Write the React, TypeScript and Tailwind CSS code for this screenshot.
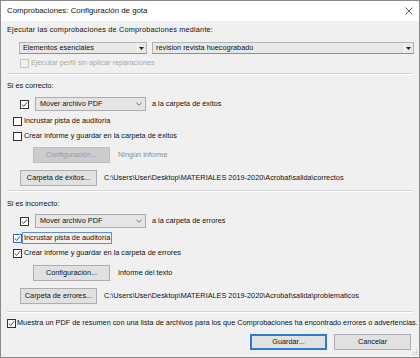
import React from 'react'

const Check = ({ checked = false, disabled = false, focus = false }: { checked?: boolean; disabled?: boolean; focus?: boolean }) => (
  <span
    className={`w-[9px] h-[9px] shrink-0 border flex items-center justify-center ${
      disabled ? 'border-[#c5c5c5] bg-[#f0f0f0]' : focus ? 'border-[#1f6fd1] bg-white' : 'border-[#333] bg-white'
    }`}
  >
    {checked && (
      <svg width="7" height="7" viewBox="0 0 7 7">
        <path d="M0.8 3.6 L2.7 5.4 L6.2 1.2" fill="none" stroke="#333" strokeWidth="0.9" />
      </svg>
    )}
  </span>
)

const CheckRow = ({ label, checked, focus }: { label: string; checked?: boolean; focus?: boolean }) => (
  <div className="h-[12px] flex items-center pl-[12px]">
    <Check checked={checked} focus={focus} />
    <span className={`ml-[1px] px-[1px] leading-[10px] ${focus ? 'outline outline-1 outline-[#5b8fd6]' : ''}`}>{label}</span>
  </div>
)

const Combo = ({ label }: { label: string }) => (
  <div className="w-[111px] h-[14px] border border-[#acacac] bg-[#e5e5e5] flex items-center justify-between pl-[4px] pr-[3px]">
    <span>{label}</span>
    <svg width="6" height="4" viewBox="0 0 6 4">
      <path d="M0.5 0.8 L3 3.2 L5.5 0.8" fill="none" stroke="#555" strokeWidth="0.8" />
    </svg>
  </div>
)

const OldCombo = ({ label, w }: { label: string; w: string }) => (
  <div className={`${w} h-[12px] border border-[#b4b4b4] border-b-[#8e8e8e] bg-[#e8e8e8] flex items-center justify-between pl-[3px] pr-[2px]`}>
    <span>{label}</span>
    <span className="flex items-center h-full border-l border-[#f7f7f7] pl-[1px]">
      <svg width="5" height="3" viewBox="0 0 5 3">
        <path d="M0 0 L5 0 L2.5 3 Z" fill="#222" />
      </svg>
    </span>
  </div>
)

const Btn = ({ label, disabled, primary, w = 'w-[77px]' }: { label: string; disabled?: boolean; primary?: boolean; w?: string }) => (
  <div
    className={`${w} h-[16px] shrink-0 flex items-center justify-center border ${
      disabled
        ? 'border-[#bfbfbf] bg-[#cccccc] text-[#9a9a9a]'
        : primary
        ? 'border-[#2a7ad5] bg-[#e1e1e1] shadow-[inset_0_0_0_1px_#2a7ad5]'
        : 'border-[#adadad] bg-[#e1e1e1]'
    }`}
  >
    {label}
  </div>
)

const Sep = () => <div className="h-[2px] border-t border-[#d5d5d5] border-b border-b-white mx-[6px]" />

export default function App() {
  return (
    <div className="relative w-[420px] h-[358px] border border-[#8a8a8a] bg-[#f0f0f0] flex flex-col text-[7.3px] text-[#111] font-['Liberation_Sans',Arial,sans-serif] overflow-hidden">
      {/* title bar */}
      <div className="h-[20px] bg-white flex items-center justify-between pl-[6px] pr-[6px] text-[7.85px]">
        <span>Comprobaciones: Configuración de gota</span>
        <svg width="8" height="8" viewBox="0 0 8 8">
          <path d="M0.5 0.5 L7.5 7.5 M7.5 0.5 L0.5 7.5" stroke="#333" strokeWidth="0.8" />
        </svg>
      </div>

      <div className="flex flex-col pt-[3px]">
        <div className="h-[12px] flex items-center pl-[6px] tracking-[0.2px]">Ejecutar las comprobaciones de Comprobaciones mediante:</div>

        <div className="mt-[6px] flex gap-[5px] pl-[18px] pr-[5px]">
          <OldCombo label="Elementos esenciales" w="w-[128px]" />
          <OldCombo label="revision revista huecograbado" w="flex-1" />
        </div>

        <div className="mt-[3px] h-[12px] flex items-center pl-[19px] text-[#a8a8a8]">
          <Check disabled />
          <span className="ml-[2px]">Ejecutar perfil sin aplicar reparaciones</span>
        </div>

        <div className="mt-[4px]"><Sep /></div>

        <div className="mt-[5px] h-[12px] flex items-center pl-[6px]">Si es correcto:</div>

        <div className="mt-[5px] flex items-center pl-[19px] gap-[6px]">
          <Check checked />
          <Combo label="Mover archivo PDF" />
          <span>a la carpeta de éxitos</span>
        </div>

        <div className="mt-[4px]"><CheckRow label="Incrustar pista de auditoría" /></div>
        <div className="mt-[3px]"><CheckRow label="Crear informe y guardar en la carpeta de éxitos" /></div>

        <div className="mt-[5px] flex items-center pl-[32px] gap-[8px]">
          <Btn label="Configuración..." disabled />
          <span className="text-[#8c8c8c]">Ningún informe</span>
        </div>

        <div className="mt-[7px] flex items-center pl-[19px] gap-[7px]">
          <Btn label="Carpeta de éxitos..." />
          <span>C:\Users\User\Desktop\MATERIALES 2019-2020\Acrobat\salida\correctos</span>
        </div>

        <div className="mt-[4px]"><Sep /></div>

        <div className="mt-[6px] h-[12px] flex items-center pl-[6px]">Si es incorrecto:</div>

        <div className="mt-[4px] flex items-center pl-[19px] gap-[6px]">
          <Check checked />
          <Combo label="Mover archivo PDF" />
          <span>a la carpeta de errores</span>
        </div>

        <div className="mt-[4px]"><CheckRow label="Incrustar pista de auditoría" checked focus /></div>
        <div className="mt-[3px]"><CheckRow label="Crear informe y guardar en la carpeta de errores" checked /></div>

        <div className="mt-[6px] flex items-center pl-[32px] gap-[8px]">
          <Btn label="Configuración..." />
          <span>Informe del texto</span>
        </div>

        <div className="mt-[7px] flex items-center pl-[19px] gap-[7px]">
          <Btn label="Carpeta de errores..." />
          <span>C:\Users\User\Desktop\MATERIALES 2019-2020\Acrobat\salida\problematicos</span>
        </div>

        <div className="mt-[7px]"><Sep /></div>

        <div className="mt-[4px] h-[12px] flex items-center pl-[6px]">
          <Check checked />
          <span className="ml-[1px]">
            Muestra un PDF de resumen con una lista de archivos para los que Comprobaciones ha encontrado errores o advertencias.
          </span>
        </div>

        <div className="mt-[5px] flex justify-end items-end gap-[7px] pr-[8px]">
          <Btn label="Guardar..." primary />
          <Btn label="Cancelar" />
        </div>
      </div>

      {/* resize grip */}
      <svg className="absolute right-[1px] bottom-[1px]" width="6" height="6" viewBox="0 0 6 6">
        <rect x="4" y="0" width="1" height="1" fill="#b8b8b8" />
        <rect x="2" y="2" width="1" height="1" fill="#b8b8b8" />
        <rect x="4" y="2" width="1" height="1" fill="#b8b8b8" />
        <rect x="0" y="4" width="1" height="1" fill="#b8b8b8" />
        <rect x="2" y="4" width="1" height="1" fill="#b8b8b8" />
        <rect x="4" y="4" width="1" height="1" fill="#b8b8b8" />
      </svg>
    </div>
  )
}
